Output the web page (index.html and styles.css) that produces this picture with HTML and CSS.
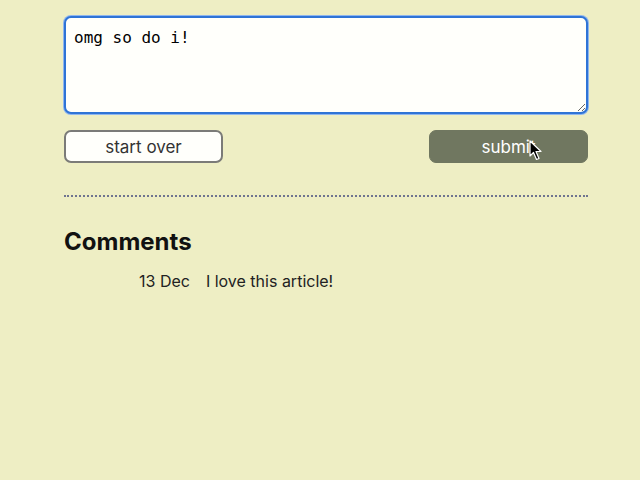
FILE: index.html
```html
<!DOCTYPE html>
<html>
<head>
<meta charset="utf-8">
<link rel="stylesheet" href="styles.css">
</head>
<body>
<main class="page">
  <form class="reply">
    <textarea class="reply-text" spellcheck="false">omg so do i!</textarea>
    <div class="actions">
      <button type="button" class="btn btn-reset">start over</button>
      <button type="button" class="btn btn-submit">submit</button>
      <svg class="cursor" width="14" height="22" viewBox="0 0 14 22"><path d="M1 1 L1 16 L4.5 12.5 L7.5 19.5 L10 18.5 L7 11.5 L12 11.5 Z" fill="#000" stroke="#fff" stroke-width="1.2" stroke-linejoin="round"/></svg>
    </div>
  </form>
  <hr class="divider">
  <section class="comments">
    <h2 class="comments-title">Comments</h2>
    <div class="comment">
      <span class="comment-date">13 Dec</span>
      <span class="comment-body">I love this article!</span>
    </div>
  </section>
</main>
</body>
</html>
```

FILE: styles.css
```css
html, body {
  margin: 0;
  padding: 0;
}
body {
  background: #eeeec4;
  font-family: Inter, "Liberation Sans", sans-serif;
  color: #1a1a1a;
  width: 640px;
  height: 480px;
  overflow: hidden;
}
.page {
  width: 524px;
  padding: 16px 0 0 64px;
}
.reply {
  display: flex;
  flex-direction: column;
  gap: 16px;
}
.reply-text {
  box-sizing: border-box;
  width: 524px;
  height: 98px;
  margin: 0;
  padding: 10px 8px;
  border: 2px solid #2f74d6;
  border-radius: 7px;
  box-shadow: 0 0 0 1px #8fb6ee;
  background: #fffffb;
  font-family: "DejaVu Sans Mono", monospace;
  font-size: 16px;
  line-height: 20px;
  color: #000;
  outline: none;
  resize: vertical;
}
.actions {
  position: relative;
  display: flex;
  justify-content: space-between;
}
.btn {
  box-sizing: border-box;
  width: 159px;
  height: 33px;
  border-radius: 7px;
  font-family: Inter, "Liberation Sans", sans-serif;
  font-size: 17px;
  padding: 0;
}
.btn-reset {
  background: #fffffb;
  border: 2px solid #7b7b78;
  color: #333;
}
.btn-submit {
  background: #707760;
  border: 1px solid #707760;
  color: #ffffff;
}
.cursor {
  position: absolute;
  left: 465px;
  top: 10px;
}
.divider {
  margin: 32px 0 0 0;
  border: 0;
  border-top: 2px dotted #6f7490;
  height: 0;
}
.comments-title {
  margin: 30px 0 0 0;
  font-size: 24px;
  font-weight: 700;
  line-height: 30px;
  color: #111;
}
.comment {
  display: flex;
  gap: 16px;
  margin: 14px 0 0 75px;
  font-size: 16px;
  line-height: 20px;
  color: #222;
}
```
